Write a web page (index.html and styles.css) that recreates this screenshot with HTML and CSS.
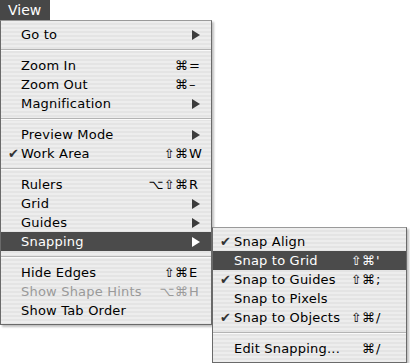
FILE: index.html
```html
<!DOCTYPE html>
<html lang="en">

<head>
    <meta charset="UTF-8">
    <title>View Menu</title>
    <link rel="stylesheet" href="styles.css">
</head>

<body>
    <div class="menubar">
        <span class="menuTitle">View</span>
    </div>

    <ul class="menu mainMenu">
        <li class="item"><span class="check"></span><span class="label">Go to</span><span class="arrow"></span></li>
        <li class="sep"></li>
        <li class="item"><span class="check"></span><span class="label">Zoom In</span><span class="keys"><span class="mod">&#8984;</span><span class="key">=</span></span></li>
        <li class="item"><span class="check"></span><span class="label">Zoom Out</span><span class="keys"><span class="mod">&#8984;</span><span class="key">&#8211;</span></span></li>
        <li class="item"><span class="check"></span><span class="label">Magnification</span><span class="arrow"></span></li>
        <li class="sep"></li>
        <li class="item"><span class="check"></span><span class="label">Preview Mode</span><span class="arrow"></span></li>
        <li class="item"><span class="check">&#10004;</span><span class="label">Work Area</span><span class="keys"><span class="mod">&#8679;&#8984;</span><span class="key">W</span></span></li>
        <li class="sep"></li>
        <li class="item"><span class="check"></span><span class="label">Rulers</span><span class="keys"><span class="mod">&#8997;&#8679;&#8984;</span><span class="key">R</span></span></li>
        <li class="item"><span class="check"></span><span class="label">Grid</span><span class="arrow"></span></li>
        <li class="item"><span class="check"></span><span class="label">Guides</span><span class="arrow"></span></li>
        <li class="item selected hasSub"><span class="check"></span><span class="label">Snapping</span><span class="arrow"></span>
            <ul class="menu subMenu">
                <li class="item"><span class="check">&#10004;</span><span class="label">Snap Align</span></li>
                <li class="item selected"><span class="check"></span><span class="label">Snap to Grid</span><span class="keys"><span class="mod">&#8679;&#8984;</span><span class="key">'</span></span></li>
                <li class="item"><span class="check">&#10004;</span><span class="label">Snap to Guides</span><span class="keys"><span class="mod">&#8679;&#8984;</span><span class="key">;</span></span></li>
                <li class="item"><span class="check"></span><span class="label">Snap to Pixels</span></li>
                <li class="item"><span class="check">&#10004;</span><span class="label">Snap to Objects</span><span class="keys"><span class="mod">&#8679;&#8984;</span><span class="key">/</span></span></li>
                <li class="sep"></li>
                <li class="item"><span class="check"></span><span class="label">Edit Snapping...</span><span class="keys"><span class="mod">&#8984;</span><span class="key">/</span></span></li>
            </ul>
        </li>
        <li class="sep"></li>
        <li class="item"><span class="check"></span><span class="label">Hide Edges</span><span class="keys"><span class="mod">&#8679;&#8984;</span><span class="key">E</span></span></li>
        <li class="item disabled"><span class="check"></span><span class="label">Show Shape Hints</span><span class="keys"><span class="mod">&#8997;&#8984;</span><span class="key">H</span></span></li>
        <li class="item"><span class="check"></span><span class="label">Show Tab Order</span></li>
    </ul>
</body>

</html>
```

FILE: styles.css
```css
html,
body {
    min-height: 363px;
}

body {
    font-family: "DejaVu Sans", Verdana, sans-serif;
    font-size: 13px;
    margin: 0;
    padding: 0;
    background-color: white;
    color: #000;
}

.menubar {
    height: 20px;
    display: flex;
}

.menuTitle {
    background-color: #474747;
    color: white;
    font-size: 14px;
    line-height: 20px;
    padding: 0 8px;
    width: 34px;
}

.menu {
    list-style: none;
    margin: 0;
    padding: 4px 0;
    background: repeating-linear-gradient(to bottom, #ededed 0, #ededed 2px, #e4e4e4 2px, #e4e4e4 4px);
    border: 1px solid #6a6a6a;
    border-top-color: #9a9a9a;
    box-shadow: 2px 2px 2px rgba(0, 0, 0, 0.25);
}

.mainMenu {
    width: 210px;
    margin-left: 0;
}

.item {
    display: flex;
    align-items: center;
    height: 19px;
    padding-right: 11px;
    letter-spacing: 0.2px;
    position: relative;
}

.check {
    width: 20px;
    flex: none;
    font-size: 13px;
    text-align: left;
    padding-left: 7px;
    box-sizing: border-box;
    color: #333;
    letter-spacing: 0;
}

.label {
    flex: 1;
    white-space: nowrap;
}

.keys {
    display: flex;
    font-size: 13px;
}

.mod {
    text-align: right;
}

.key {
    width: 11px;
    text-align: left;
    padding-left: 1px;
}

.arrow {
    width: 0;
    height: 0;
    border-left: 8px solid #3c3c3c;
    border-top: 5px solid transparent;
    border-bottom: 5px solid transparent;
}

.selected {
    background-color: #4b4b4b;
    color: white;
}

.selected .arrow {
    border-left-color: white;
}

.disabled {
    color: #9a9a9a;
}

.sep {
    height: 12px;
    background: linear-gradient(to bottom, transparent 5px, #b4b4b4 5px, #b4b4b4 6px, #fafafa 6px, #fafafa 7px, transparent 7px);
}

.subMenu {
    position: absolute;
    left: 211px;
    top: -5px;
    width: 193px;
    color: #000;
    z-index: 2;
}

.subMenu .item {
    padding-right: 18px;
}

.subMenu .check {
    width: 21px;
    padding-left: 7px;
}

.subMenu .key {
    width: 12px;
}

.subMenu .selected {
    color: white;
}
```
